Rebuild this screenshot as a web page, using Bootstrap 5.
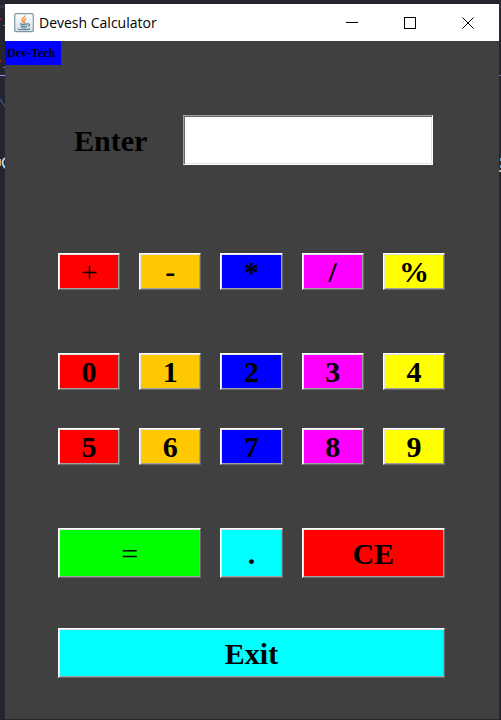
<!DOCTYPE html>
<html lang="en">
<head>
<meta charset="utf-8">
<meta name="viewport" content="width=device-width, initial-scale=1">
<title>Devesh Calculator</title>
<link href="https://cdn.jsdelivr.net/npm/bootstrap@5.3.0/dist/css/bootstrap.min.css" rel="stylesheet">
<style>
  body { background: #25252f; font-family: "Liberation Serif", "Times New Roman", serif; color: #000; }
  .desktop { padding: 4px 2px 1px 5px; }
  .backdrop { position: absolute; top: 0; }
  .backdrop-left { left: 0; }
  .backdrop-right { right: 0; }
  .app-window { background: #404040; }
  .titlebar { height: 37px; background: #fff; padding: 0 2px 0 9px; }
  .app-title { font: 14px/20px "Open Sans", "Segoe UI", sans-serif; margin-left: 5px; }
  .win-btn { width: 58px; height: 35px; background: none; color: #000; }
  .tag { width: 56px; height: 24px; padding-left: 2px; background: #00f; font-size: 12px; line-height: 24px; font-weight: 700; }
  .calc { padding: 50px 54px 0 53px; }
  .entry { padding: 0 12px 0 16px; margin-bottom: 88px; }
  .entry label { width: 109px; height: 50px; font-size: 30px; line-height: 52px; font-weight: 700; }
  .display {
    height: 50px; min-width: 0; background: #fff; font-size: 30px; font-weight: 700; padding: 0 4px;
    border: 1px solid; border-color: #a0a0a0 #fff #fff #a0a0a0; border-radius: 0;
    box-shadow: inset 1px 1px #696969, inset -1px -1px #e3e3e3;
  }
  .keys { grid-template-columns: repeat(5, minmax(0, 1fr)); column-gap: 19px; }
  .wide { grid-column: span 2; }
  .full { grid-column: span 5; }
  .key {
    height: 37px; padding: 0; border: 1px solid; border-color: #fff #696969 #696969 #fff; border-radius: 0;
    box-shadow: inset 1px 1px #e3e3e3, inset -1px -1px #a0a0a0;
    color: #000; font-size: 30px; line-height: 35px; font-weight: 700;
  }
  .tall { height: 50px; line-height: 46px; padding-top: 2px; }
  .thin { font-weight: 400; }
  .gap-lg { margin-bottom: 63px; }
  .gap-md { margin-bottom: 38px; }
  .gap-sm { margin-bottom: 50px; }
  .red { background: #f00; }
  .amber { background: #ffc800; }
  .blue { background: #00f; }
  .pink { background: #f0f; }
  .sun { background: #ff0; }
  .green { background: #0f0; }
  .aqua { background: #0ff; }
</style>
<script src="https://cdn.jsdelivr.net/npm/bootstrap@5.3.0/dist/js/bootstrap.bundle.min.js"></script>
</head>
<body>
<div class="desktop d-flex flex-column min-vh-100 position-relative">
  <svg class="backdrop backdrop-left" width="5" height="180" aria-hidden="true">
    <path d="M0 5h5v3H0z" fill="#343442"/>
    <path d="M0 19h1M0 61h1" stroke="#a02838" stroke-width="2"/>
    <path d="M3 25.500h2M3 67.500h2" stroke="#6c7480"/>
    <path d="M0 75.500h5" stroke="#b18be0"/>
    <path d="M0 99l5 8" stroke="#4c68a8" fill="none"/>
    <path d="M0 159v7" stroke="#d8a860" stroke-width="2"/>
    <path d="M5 158q-5 4 0 10" stroke="#a8d8f0" stroke-width="2" fill="none"/>
  </svg>
  <svg class="backdrop backdrop-right" width="2" height="180" aria-hidden="true">
    <path d="M0 5h2v3H0z" fill="#343442"/>
    <path d="M0 75.500h2" stroke="#8870b8"/>
    <path d="M1 158h1v3H1zM1 165h1v3H1z" fill="#62a8d8"/>
    <path d="M0 170h2v2H0z" fill="#b0b0b0"/>
  </svg>

  <main class="app-window flex-grow-1 d-flex flex-column">
    <header class="titlebar d-flex align-items-center">
      <svg width="20" height="20" viewBox="0 0 20 20" fill="none" aria-hidden="true">
        <defs><linearGradient id="tile" x2="0" y2="1"><stop stop-color="#fdfdfd"/><stop offset="1" stop-color="#d8dde0"/></linearGradient></defs>
        <rect x=".7" y=".7" width="18.600" height="18" rx="1.500" fill="url(#tile)" stroke="#8298a8" stroke-width="1.200"/>
        <path d="M10.500 2.500c1.500 2-3.500 3-2.500 5 .3 1 1.500 1.500 1.300 2.500M12.500 5.500c-3 1.500-3 2.500-2 3.500.5.600 0 1-.3 1.500" stroke="#ef8b43" stroke-width="1.300"/>
        <path d="M6 10.800c1 .7 6 .7 7.500 0M6.500 12.800c1 .8 5 .8 6.500 0M7 14.500c1.500.6 4 .6 5.500 0M13.500 11c3-.6 2.500 2 .2 2.400M4.500 15.500c-1.500 1.500 9 2 11.500 0" stroke="#507f9d" stroke-width="1.100"/>
      </svg>
      <span class="app-title">Devesh Calculator</span>
      <div class="ms-auto d-flex">
        <button class="win-btn border-0 p-0 d-flex align-items-center justify-content-center" type="button" aria-label="Minimize">
          <svg width="12" height="12" stroke="currentColor" shape-rendering="crispEdges"><path d="M0 5.500h12"/></svg>
        </button>
        <button class="win-btn border-0 p-0 d-flex align-items-center justify-content-center" type="button" aria-label="Maximize">
          <svg width="12" height="12" stroke="currentColor" fill="none" shape-rendering="crispEdges"><path d="M.5.500h11v11H.5z"/></svg>
        </button>
        <button class="win-btn border-0 p-0 d-flex align-items-center justify-content-center" type="button" aria-label="Close">
          <svg width="12" height="12" stroke="currentColor"><path d="M.5.500l11 11M11.500.500l-11 11"/></svg>
        </button>
      </div>
    </header>

    <div class="tag text-nowrap">Dev-Tech</div>

    <div class="calc">
      <div class="entry d-flex">
        <label for="display" class="flex-shrink-0">Enter</label>
        <input id="display" class="display flex-grow-1" type="text">
      </div>
      <div class="keys d-grid gap-lg">
        <button type="button" class="key thin red">+</button>
        <button type="button" class="key amber">-</button>
        <button type="button" class="key blue">*</button>
        <button type="button" class="key pink">/</button>
        <button type="button" class="key sun">%</button>
      </div>
      <div class="keys d-grid gap-md">
        <button type="button" class="key red">0</button>
        <button type="button" class="key amber">1</button>
        <button type="button" class="key blue">2</button>
        <button type="button" class="key pink">3</button>
        <button type="button" class="key sun">4</button>
      </div>
      <div class="keys d-grid gap-lg">
        <button type="button" class="key red">5</button>
        <button type="button" class="key amber">6</button>
        <button type="button" class="key blue">7</button>
        <button type="button" class="key pink">8</button>
        <button type="button" class="key sun">9</button>
      </div>
      <div class="keys d-grid gap-sm">
        <button type="button" class="key tall thin wide green">=</button>
        <button type="button" class="key tall aqua">.</button>
        <button type="button" class="key tall wide red">CE</button>
      </div>
      <div class="keys d-grid">
        <button type="button" class="key tall full aqua">Exit</button>
      </div>
    </div>
  </main>
</div>
</body>
</html>
